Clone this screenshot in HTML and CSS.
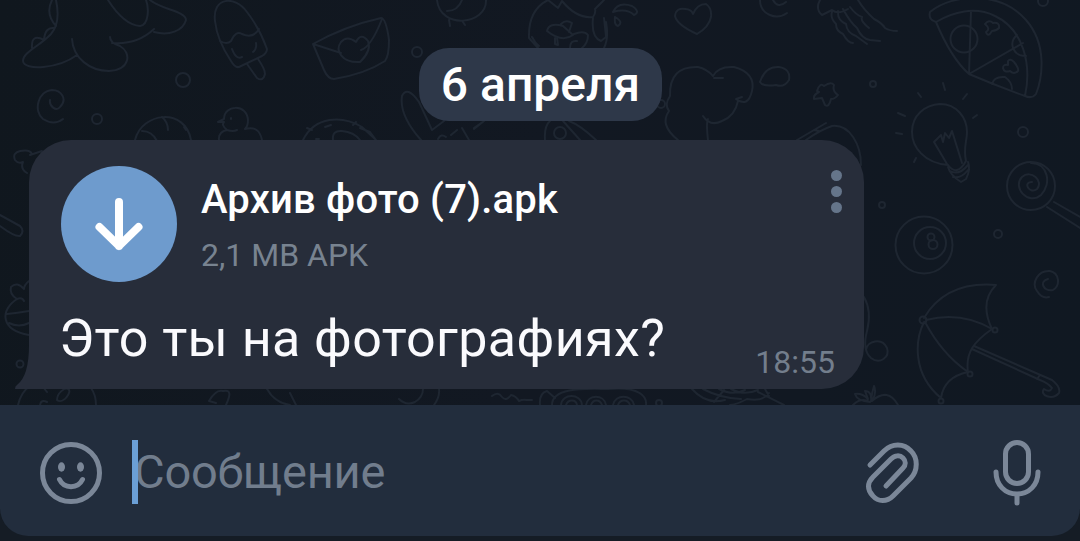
FILE: index.html
```html
<!DOCTYPE html>
<html lang="ru">

<head>
	<meta charset="UTF-8" />
	<meta name="viewport" content="width=device-width, initial-scale=1.0" />
	<title>Чат</title>
	<link rel="stylesheet" href="styles.css">
</head>

<body>
	<div class="chat">
		<svg class="wallpaper" viewBox="0 0 1080 405" width="1080" height="405">
			<!-- dinosaur -->
			<path d="M56 0C59 14 58 26 51 34C40 46 23 52 23 61C24 71 58 69 77 55M72 39C73 58 90 71 109 71C130 70 132 53 120 46Q110 43 110 37M112 43Q137 45 154 29M150 0C162 10 186 11 186 20C183 31 169 36 154 32M108 0Q124 25 140 26C149 25 149 8 146 0M52 0Q45 14 56 26M54 28Q45 27 44 40M44 40Q31 33 32 48" />
			<!-- ice cream -->
			<path d="M215 21C212 -3 235 -5 247 12Q260 29 267 49Q267 53 262 56L239 67Q235 68 231 61Q217 40 215 21M220 41Q227 45 231 41Q236 30 242 34Q253 39 259 29M232 49Q236 60 242 57M256 43Q257 49 253 52M247 64L257 78Q263 82 265 74Q265 69 258 59" />
			<!-- envelope -->
			<path d="M313 44Q345 26 381 18Q386 18 389 40Q389 56 385 61Q365 74 334 79Q328 79 324 70ZL341 53M382 19Q371 47 361 50M360 62C341 63 335 50 341 42Q347 35 356 42Q361 32 368 41C372 51 363 59 360 62" />
			<path d="M437 0C440 30 487 25 486 0M462 0Q458 11 447 11M449 20L450 26M463 22L465 25" />
			<!-- fish bowl -->
			<path d="M548 0L558 8L562 1Q577 19 593 17Q596 13 595 9L604 0M548 0Q528 10 529 38L538 48M593 18Q591 37 601 41L606 37L604 18M606 22Q609 38 604 48M532 37Q535 43 539 46M547 31Q549 22 563 26L573 35Q562 43 547 31M561 24Q566 19 572 23L569 32M555 38L555 44L558 45L557 38M574 34Q584 30 588 35Q588 43 582 48M570 48Q570 40 577 41" />
			<path d="M613 12Q618 1 632 6Q641 12 634 15Q627 8 613 12M615 17Q614 25 618 26Q624 22 615 17M697 34Q677 25 675 16Q676 7 686 9Q692 10 693 14Q697 4 706 4Q712 8 711 17Q709 27 697 34M760 0C760 14 776 21 787 13M773 0Q778 9 786 2" />
			<!-- jellyfish -->
			<path d="M820 0Q815 9 822 15Q828 12 832 10Q838 15 848 9M832 12Q830 18 836 24Q836 31 843 34Q848 43 853 43M838 11Q837 20 846 24Q847 33 856 36L867 44M843 9Q850 22 857 28Q862 39 870 40L880 41M850 7Q856 15 862 17Q860 21 869 28M858 0Q864 10 874 19Q882 23 885 28Q890 31 897 31" />
			<!-- pizza -->
			<path d="M936 22Q928 20 930 12C953 -7 1001 -9 1026 20C1048 45 1042 79 1036 94Q1032 99 1025 96M936 22C953 12 975 6 995 16C1023 29 1032 64 1025 96Q997 86 969 74Q951 58 936 22M971 11L969 74L1023 43M992 84Q994 76 1005 77Q1012 82 1012 89M1017 35C1008 43 1013 56 1026 56M985 24Q989 19 993 23Q1000 22 999 28Q996 31 992 31Q988 38 986 32Q991 29 985 24M1008 61Q1010 58 1014 62Q1019 68 1018 71Q1014 75 1010 71Q1004 73 1003 68Q1003 64 1008 65Z" />
			<circle cx="964" cy="39" r="13.5" />
			<!-- lightbulb -->
			<path d="M948 165C924 163 912 147 912 132C912 115 925 105 940 104C957 104 967 118 967 132C967 141 963 148 966 161M948 165Q957 177 966 161M948 167Q950 175 961 182L966 179Q971 169 968 162M950 171Q959 176 968 165M953 177Q961 179 968 170M947 164L934 142L941 135L943 142L945 133L949 138L952 131L962 163M921 97L918 93M945 90L943 83M963 99L967 94M973 118L977 115M905 116L898 113M902 134L896 133M914 162L916 158" />
			<!-- lollipop and swirls -->
			<circle cx="1031" cy="186" r="24" />
			<path d="M1031 163C1048 163 1052 184 1041 195C1028 206 1012 187 1022 177C1031 169 1044 181 1037 189C1030 195 1022 182 1032 182M1054 202L1080 217M1047 207L1080 228" />
			<path d="M50 100C49 106 56 112 60 107C68 99 61 90 52 90C38 91 33 111 43 119Q54 126 63 119M1048 279C1039 281 1043 292 1053 290C1061 285 1059 273 1050 271C1038 270 1031 283 1037 291Q1042 299 1049 297" />
			<!-- small dots -->
			<circle cx="183" cy="80" r="7" /><circle cx="97" cy="119" r="5" />
			<circle cx="417" cy="52" r="5" /><circle cx="661" cy="104" r="4" />
			<circle cx="873" cy="84" r="3" /><circle cx="1023" cy="132" r="5" />
			<circle cx="1043" cy="1" r="5" /><circle cx="882" cy="205" r="3" />
			<circle cx="998" cy="234" r="4" /><circle cx="20" cy="364" r="3.5" />
			<circle cx="659" cy="403" r="3" />
			<!-- ball, duck, doughnut -->
			<path d="M135 140C142 112 185 107 191 140M142 131Q152 131 157 141M162 117Q168 122 168 130M184 127L186 130" />
			<path d="M219 140Q218 132 227 130Q221 125 224 122L218 122L224 119C224 105 247 103 248 120Q248 126 245 129Q259 125 262 140M227 130Q233 132 237 130M231 118L231 119" />
			<path d="M303 140C315 116 342 115 362 127L376 140M333 140Q332 130 342 131Q354 132 360 140M325 127L331 125M307 128L312 130M316 139L319 139M353 125L356 122M360 128L370 132L376 140" />
			<path d="M421 140Q399 115 402 96Q407 85 419 102L432 130L444 121M469 140L462 128M438 139Q441 133 446 137M451 135L457 130M474 129L484 121L474 128ZM545 140Q544 126 550 121M563 121L580 140M569 121Q580 125 596 140" />
			<circle cx="560" cy="133" r="6" />
			<!-- tree and cloud -->
			<path d="M678 140Q659 125 669 111Q664 105 670 96Q669 66 698 67Q707 69 713 76Q718 66 734 67Q756 73 752 91Q748 108 736 99L742 97M738 101Q735 116 722 121Q710 127 703 116M708 119Q706 122 708 140M714 78L723 78" />
			<path d="M760 82Q765 66 779 67Q791 69 789 80Q784 88 776 85Q763 87 760 82M817 91Q820 82 824 86Q831 81 834 85Q832 91 838 95Q835 99 831 99Q829 108 825 105L822 98L814 99Q813 95 819 92ZM797 140L826 123M806 140Q820 130 832 126C850 124 861 145 861 165M814 130L819 131" />
			<!-- eight ball -->
			<circle cx="924" cy="245" r="28.5" /><circle cx="930" cy="243" r="16" />
			<circle cx="931" cy="237" r="3.5" /><circle cx="933" cy="244.500" r="4.500" />
			<!-- umbrella -->
			<path d="M924 318Q946 281 996 285Q979 302 992 329C975 341 965 352 968 372Q944 377 941 398C912 374 915 340 924 322M926 320Q961 311 992 329M925 322Q942 354 968 372M974 346L1052 380Q1061 387 1059 393C1052 401 1039 395 1044 389Q1050 393 1052 388Q1048 383 1040 380L972 349M1040 375L1037 379" />
			<circle cx="923" cy="320" r="3.5" /><circle cx="995" cy="330" r="2.500" /><circle cx="970" cy="374" r="2.500" /><circle cx="941" cy="401" r="2.500" />
			<!-- objects peeking out around the bubble -->
			<path d="M864 297Q872 311 867 331Q862 350 871 358C880 365 890 357 887 348C882 337 867 341 866 350" />
			<path d="M853 405Q861 397 870 402Q857 401 855 394Q862 393 868 399L865 391Q872 391 871 401Q872 392 874 386Q877 393 872 401Q888 387 898 405" />
			<path d="M32 154Q30 149 20 151Q12 153 15 160Q18 164 23 162Q20 169 27 173M30 155L42 151M0 215L20 226Q25 231 20 236Q15 237 0 226" />
			<path d="M29 281Q24 285 24 289Q17 281 11 287Q9 294 17 299C0 310 0 330 29 335M17 299Q22 297 24 301M7 314Q17 313 29 311M9 323Q19 328 29 323" />
			<path d="M18 405Q21 392 30 386M96 405Q96 395 91 388M43 387L47 392M57 400C57 393 65 387 68 389C73 391 63 405 57 400M40 405Q41 399 47 402" />
			<path d="M209 401Q216 389 223 391C232 389 230 396 226 405M209 401L216 403M267 389Q275 403 290 405M290 393L296 405" />
			<path d="M399 399Q406 406 415 402Q423 397 423 389M439 389Q440 397 434 405M492 396Q498 391 502 397Q506 402 511 395Q516 396 519 401Q523 399 527 400L532 400M540 405Q539 393 547 391L555 398M552 405C552 386 590 389 608 389C640 386 647 397 646 405M561 405C562 393 581 393 582 405M566 405C568 399 576 399 577 405M586 405C588 394 604 394 606 405M591 405C593 399 600 399 602 405M613 405C615 394 632 394 634 405M618 405C620 399 628 399 630 405" />
			<path d="M692 389Q706 405 725 400M703 389Q720 398 741 399M719 389Q733 396 745 390M731 389Q744 396 758 390M765 389L769 396M730 405Q738 404 747 399Q763 402 769 393M714 402L724 390M758 392L784 405" />
		</svg>

		<div class="date">6 апреля</div>

		<div class="message">
			<svg class="tail" viewBox="0 0 30 50" width="30" height="50">
				<path d="M14 0V5Q14 36 2 45Q0 46 0 49H30V0Z" />
			</svg>
			<div class="file">
				<div class="download">
					<svg viewBox="0 0 116 116" width="116" height="116">
						<path d="M58 36V80M38.500 61L58 80L77.500 61" />
					</svg>
				</div>
				<div class="info">
					<div class="name">Архив фото (7).apk</div>
					<div class="size">2,1 MB APK</div>
				</div>
				<div class="menu">
					<span></span>
					<span></span>
					<span></span>
				</div>
			</div>
			<div class="bottom">
				<div class="text">Это ты на фотографиях?</div>
				<div class="time">18:55</div>
			</div>
		</div>
	</div>

	<div class="panel">
		<svg class="icon smile" viewBox="0 0 62 62" width="62" height="62">
			<circle cx="31" cy="31" r="28.500" />
			<path d="M19.500 37.500C24 47 38 47 42.500 37.500" />
			<ellipse class="eye" cx="21.500" cy="25" rx="3.500" ry="4.700" />
			<ellipse class="eye" cx="40.500" cy="25" rx="3.500" ry="4.700" />
		</svg>
		<div class="caret"></div>
		<div class="placeholder">Сообщение</div>
		<svg class="icon clip" viewBox="0 0 54 62" width="54" height="62">
			<path d="M4 23L18 9C26 1 38 1 45 9C52 16 52 28 45 36L27 54C21 60 12 60 7 54C1 48 1 41 7 35L25 17C29 13 34 13 37 16C40 19 40 23 37 26L20 44" />
		</svg>
		<svg class="icon mic" viewBox="0 0 50 68" width="50" height="68">
			<rect x="13.500" y="4.500" width="23" height="41" rx="11.500" />
			<path d="M4 34C4 47 13 56 25 56S46 47 46 34M25 57V65" />
		</svg>
	</div>
</body>

</html>
```
FILE: styles.css
```css
* {
	box-sizing: border-box;
}

body {
	margin: 0;
	width: 1080px;
	height: 541px;
	overflow: hidden;
	background: #151c25;
	font-family: Roboto, "Noto Sans", sans-serif;
}

.chat {
	height: 405px;
	padding-top: 48px;
	position: relative;
	background: linear-gradient(100deg, #10171e, #121822 50%, #101822);
}

.wallpaper {
	position: absolute;
	top: 0;
	left: 0;
	fill: none;
	stroke: #1e2631;
	stroke-width: 2;
	stroke-linecap: round;
	stroke-linejoin: round;
}

.date {
	width: 243px;
	height: 73px;
	margin: 0 auto 19px 419px;
	position: relative;
	border-radius: 30px;
	background: #2e3849;
	color: #fff;
	font-size: 48px;
	font-weight: 500;
	line-height: 73px;
	text-align: center;
	white-space: nowrap;
}

.message {
	width: 835px;
	height: 249px;
	margin-left: 29px;
	padding: 26px 29px 0 32px;
	position: relative;
	border-radius: 42px 42px 42px 0;
	background: #272d3a;
}

.tail {
	position: absolute;
	left: -14px;
	bottom: -1px;
	fill: #272d3a;
}

.file {
	display: flex;
	height: 116px;
	margin-right: -7px;
}

.download {
	width: 116px;
	height: 116px;
	border-radius: 50%;
	background: #6e9bcd;
}

.download svg {
	display: block;
	fill: none;
	stroke: #fff;
	stroke-width: 8;
	stroke-linecap: round;
	stroke-linejoin: round;
}

.info {
	flex: 1;
	padding: 10px 0 0 24px;
	white-space: nowrap;
}

.name {
	color: #fff;
	font-size: 40px;
	font-weight: 500;
	line-height: 48px;
	letter-spacing: 0.18px;
}

.size {
	margin-top: 11px;
	color: #788390;
	font-size: 32px;
	line-height: 40px;
}

.menu {
	display: flex;
	flex-direction: column;
	gap: 5px;
	padding-top: 4px;
}

.menu span {
	width: 11px;
	height: 11px;
	border-radius: 50%;
	background: #65758a;
}

.bottom {
	display: flex;
	justify-content: space-between;
	padding-top: 26px;
	white-space: nowrap;
}

.text {
	margin-left: -2px;
	color: #fafafd;
	font-size: 52px;
	line-height: 62px;
	letter-spacing: 0.4px;
}

.time {
	padding-top: 34px;
	color: #737e8c;
	font-size: 32px;
	line-height: 40px;
}

.panel {
	display: flex;
	height: 131px;
	padding: 0 38px 0 40px;
	border-radius: 0 0 28px 28px;
	background: #222d3d;
}

.icon {
	fill: none;
	stroke: #7b8798;
	stroke-width: 5;
	stroke-linecap: round;
	stroke-linejoin: round;
}

.smile {
	margin-top: 37px;
}

.smile .eye {
	fill: #7b8798;
	stroke: none;
}

.caret {
	width: 6px;
	height: 64px;
	margin: 35px 0 0 30px;
	position: relative;
	z-index: 1;
	background: #6b9fd6;
}

.placeholder {
	flex: 1;
	margin-left: -4px;
	color: #717d8d;
	font-size: 47px;
	line-height: 134px;
	letter-spacing: -0.2px;
}

.clip {
	margin: 37px 72px 0 0;
}

.mic {
	margin-top: 33px;
}
```
